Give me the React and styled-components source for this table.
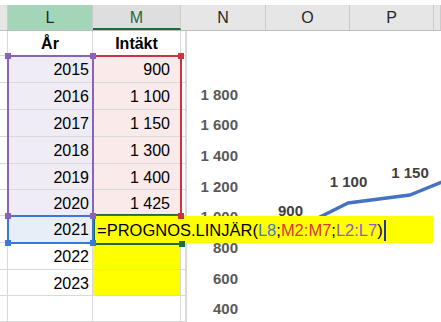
import React from 'react';
import styled, { createGlobalStyle } from 'styled-components';

const GlobalStyle = createGlobalStyle`
  html, body {
    margin: 0;
    padding: 0;
    background: #fff;
  }
  body {
    font-family: "Liberation Sans", Arial, sans-serif;
  }
`;

// column widths in px (K stub, L, M, N stub)
const GRID_COLS = [8, 85, 88, 5];
const ROW_HEIGHTS = [25, 27, 27, 27, 27, 26, 26, 27, 27, 26, 26];

const rows = [
  { l: 'År', m: 'Intäkt', kind: 'title' },
  { l: '2015', m: '900', kind: 'range' },
  { l: '2016', m: '1 100', kind: 'range' },
  { l: '2017', m: '1 150', kind: 'range' },
  { l: '2018', m: '1 300', kind: 'range' },
  { l: '2019', m: '1 400', kind: 'range' },
  { l: '2020', m: '1 425', kind: 'range' },
  { l: '2021', m: '', kind: 'current' },
  { l: '2022', m: '', kind: 'forecast' },
  { l: '2023', m: '', kind: 'forecast' },
  { l: '', m: '', kind: 'empty' },
];

const Sheet = styled.div`
  position: relative;
  width: 441px;
  height: 322px;
  padding-top: 5px;
  box-sizing: border-box;
  overflow: hidden;
  background: #fff;
`;

const HeaderRow = styled.div`
  display: flex;
  height: 26px;
  background: #e6e6e6;
  border-bottom: 1px solid #bdbdbd;
  box-sizing: border-box;
`;

const ColHead = styled.div`
  flex: 0 0 ${p => p.$w}px;
  display: flex;
  align-items: center;
  justify-content: center;
  box-sizing: border-box;
  border-right: 1px solid #cbcbcb;
  font-size: 16px;
  color: ${p => (p.$state === 'active' ? '#1e6b41' : '#262626')};
  background: ${p => (p.$state === 'selected' ? '#a3d6b9' : p.$state === 'active' ? '#dedede' : '#e6e6e6')};
  border-bottom: ${p => (p.$state === 'active' ? '2px solid #1e6b41' : 'none')};
  padding-top: ${p => (p.$state === 'active' ? '2px' : '0')};
`;

const Body = styled.div`
  display: flex;
  height: 291px;
`;

const Grid = styled.div`
  display: grid;
  grid-template-columns: ${GRID_COLS.map(c => `${c}px`).join(' ')};
  grid-template-rows: ${ROW_HEIGHTS.map(r => `${r}px`).join(' ')};
`;

const Cell = styled.div`
  box-sizing: border-box;
  border-right: 1px solid #d9d9d9;
  border-bottom: 1px solid #d9d9d9;
  display: flex;
  align-items: center;
  justify-content: ${p => (p.$center ? 'center' : 'flex-end')};
  padding: 2px ${p => p.$pad || 0}px 0 0;
  font-size: 16px;
  font-weight: ${p => (p.$bold ? 700 : 400)};
  color: #000;
  background: ${p => p.$bg || '#fff'};
  white-space: nowrap;
`;

const Chart = styled.div`
  flex: 1;
  border-left: 1px solid #d9d9d9;
  background: #fff;
`;

// selection outline of a referenced range, drawn over the grid
const RangeBox = styled.div`
  position: absolute;
  left: ${p => p.$x0 - 1}px;
  top: ${p => p.$y0 - 1}px;
  width: ${p => p.$x1 - p.$x0 + 2}px;
  height: ${p => p.$y1 - p.$y0 + 2}px;
  border: 2px solid ${p => p.$color};
  box-sizing: border-box;
  pointer-events: none;
`;

const Handle = styled.div`
  position: absolute;
  left: ${p => p.$x - 3}px;
  top: ${p => p.$y - 3}px;
  width: 6px;
  height: 6px;
  background: ${p => p.$color};
`;

const FormulaBox = styled.div`
  position: absolute;
  left: 95px;
  top: 216px;
  width: 338px;
  height: 27px;
  background: #ffff00;
  display: flex;
  align-items: center;
  padding: 2px 0 0 2px;
  box-sizing: border-box;
  font-size: 16.5px;
  color: #000;
  white-space: nowrap;
`;

const Ref = styled.span`
  color: ${p => p.$color};
`;

const Caret = styled.span`
  display: inline-block;
  width: 2px;
  height: 21px;
  margin-left: 1px;
  background: #2233aa;
`;

const PURPLE = '#8764b8';
const RED = '#cc3340';
const BLUE = '#3b78d4';
const GREEN = '#1e6b41';

function cellBg(kind, col) {
  if (kind === 'range') return col === 'l' ? '#efecf6' : '#fbeaea';
  if (kind === 'current') return col === 'l' ? '#e8eef8' : '#ffff00';
  if (kind === 'forecast') return col === 'm' ? '#ffff00' : '#fff';
  return '#fff';
}

const axisValues = [1800, 1600, 1400, 1200, 1000, 800, 600, 400];
const points = [
  [103, 201],
  [161, 172],
  [223, 164],
  [284, 139],
];
const dataLabels = [
  { x: 103.5, y: 179, t: '900' },
  { x: 161.5, y: 150, t: '1 100' },
  { x: 223, y: 141, t: '1 150' },
];

const fmt = v => (v >= 1000 ? `${Math.floor(v / 1000)} ${String(v % 1000).padStart(3, '0')}` : String(v));

const LineChart = () => (
  <svg width="255" height="291" style={{ display: 'block' }}>
    {axisValues.map((v, i) => (
      <text
        key={v}
        x="51"
        y={63 + i * 30.7 + 5.5}
        textAnchor="end"
        fontFamily="Liberation Sans, Arial, sans-serif"
        fontSize="15"
        fontWeight="700"
        fill="#595959"
      >
        {fmt(v)}
      </text>
    ))}
    <polyline
      points={points.map(p => p.join(',')).join(' ')}
      fill="none"
      stroke="#4472c4"
      strokeWidth="3.5"
      strokeLinejoin="round"
      strokeLinecap="round"
    />
    {dataLabels.map(l => (
      <text
        key={l.t}
        x={l.x}
        y={l.y + 5.5}
        textAnchor="middle"
        fontFamily="Liberation Sans, Arial, sans-serif"
        fontSize="15"
        fontWeight="700"
        fill="#404040"
      >
        {l.t}
      </text>
    ))}
  </svg>
);

export default function App() {
  return (
    <>
      <GlobalStyle />
      <Sheet>
        <HeaderRow>
          <ColHead $w={8} />
          <ColHead $w={85} $state="selected">L</ColHead>
          <ColHead $w={88} $state="active">M</ColHead>
          <ColHead $w={85}>N</ColHead>
          <ColHead $w={84}>O</ColHead>
          <ColHead $w={84}>P</ColHead>
          <ColHead $w={7} />
        </HeaderRow>
        <Body>
          <Grid>
            {rows.map((r, i) => (
              <React.Fragment key={i}>
                <Cell />
                <Cell
                  $bg={cellBg(r.kind, 'l')}
                  $center={r.kind === 'title'}
                  $bold={r.kind === 'title'}
                  $pad={r.kind === 'title' ? 0 : 3}
                >
                  {r.l}
                </Cell>
                <Cell
                  $bg={cellBg(r.kind, 'm')}
                  $center={r.kind === 'title'}
                  $bold={r.kind === 'title'}
                  $pad={r.kind === 'title' ? 0 : 10}
                >
                  {r.m}
                </Cell>
                <Cell />
              </React.Fragment>
            ))}
          </Grid>
          <Chart>
            <LineChart />
          </Chart>
        </Body>

        <RangeBox $color={GREEN} $x0={94} $y0={215} $x1={182} $y1={244} />
        <RangeBox $color={RED} $x0={93} $y0={56} $x1={181} $y1={216} />
        <RangeBox $color={PURPLE} $x0={8} $y0={56} $x1={93} $y1={216} />
        <RangeBox $color={BLUE} $x0={8} $y0={216} $x1={93} $y1={243} />

        <FormulaBox>
          =PROGNOS.LINJÄR(<Ref $color="#3c78d0">L8</Ref>;<Ref $color="#d03a3a">M2:M7</Ref>;
          <Ref $color="#8b62c0">L2:L7</Ref>)<Caret />
        </FormulaBox>

        <Handle $color={RED} $x={181} $y={56} />
        <Handle $color={RED} $x={181} $y={216} />
        <Handle $color={BLUE} $x={8} $y={243} />
        <Handle $color={BLUE} $x={93} $y={243} />
        <Handle $color={PURPLE} $x={8} $y={56} />
        <Handle $color={PURPLE} $x={93} $y={56} />
        <Handle $color={PURPLE} $x={8} $y={216} />
        <Handle $color={PURPLE} $x={93} $y={216} />
        <Handle $color={GREEN} $x={182} $y={244} />
      </Sheet>
    </>
  );
}
